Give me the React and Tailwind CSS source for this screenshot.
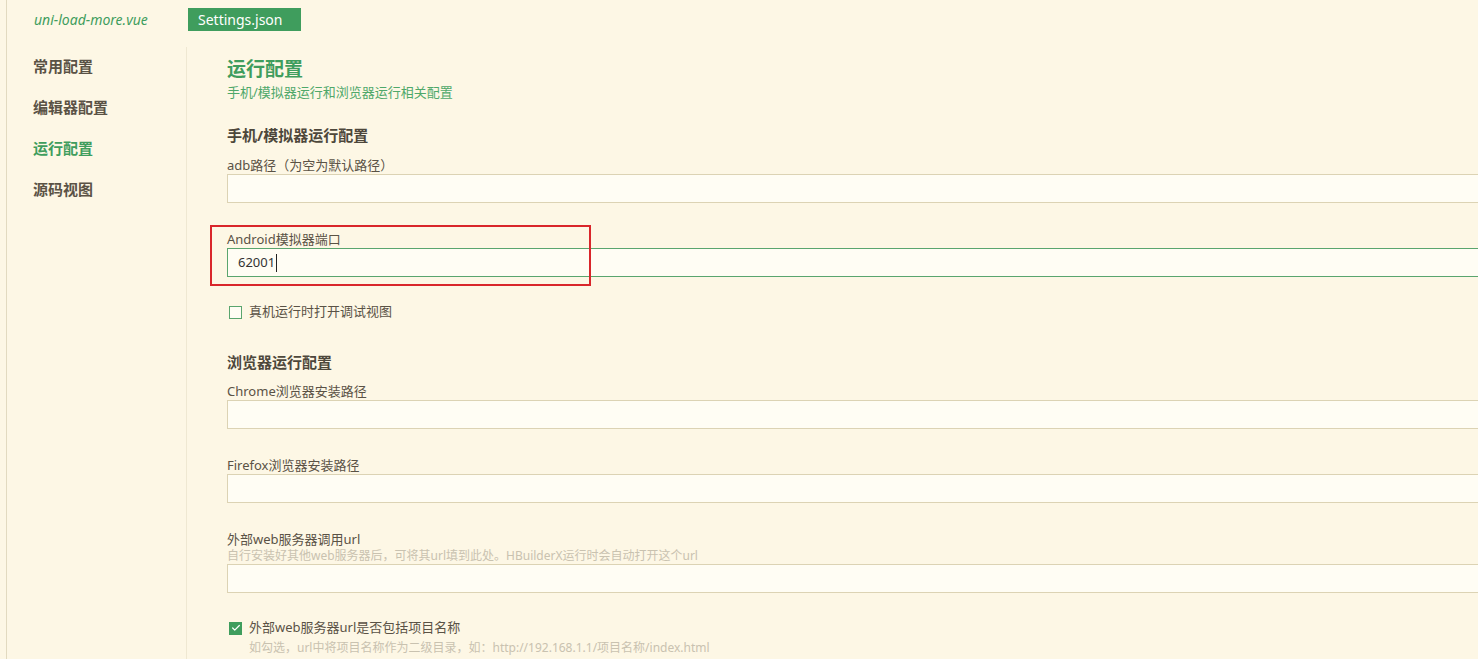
import { Check } from 'lucide-react'

const font = { fontFamily: '"Noto Sans", "Noto Sans CJK SC", sans-serif' }

function Field({ label, hint, value, active }) {
  return (
    <div>
      <div className="text-[13px] leading-[18px] text-[#5a5245]">{label}</div>
      {hint && <div className="text-[12px] leading-[16px] text-[#c9c2b0]">{hint}</div>}
      <div
        className={`flex h-[29px] items-center border border-r-0 bg-[#fffdf4] pl-[10px] text-[13px] text-[#333] ${
          active ? 'border-[#5aa56e]' : 'border-[#dcd3b4]'
        }`}
      >
        {value}
        {active && <span className="ml-[1px] inline-block h-[18px] w-px bg-[#222]" />}
      </div>
    </div>
  )
}

function Checkbox({ checked, label, hint }) {
  return (
    <div>
      <div className="flex h-[20px] items-center gap-[7px]">
        {checked ? (
          <span className="flex h-[13px] w-[13px] items-center justify-center bg-[#3f9d5d]">
            <Check size={10} strokeWidth={3} className="text-white" />
          </span>
        ) : (
          <span className="h-[13px] w-[13px] border border-[#5aa56e] bg-[#fffdf4]" />
        )}
        <span className="text-[13px] text-[#5a5245]">{label}</span>
      </div>
      {hint && <div className="mt-[2px] ml-[20px] text-[12px] leading-[16px] text-[#c9c2b0]">{hint}</div>}
    </div>
  )
}

export default function App() {
  return (
    <div className="h-[659px] w-[1478px] overflow-hidden bg-[#fdf7e5]" style={font}>
      <div className="ml-[6px] flex h-full flex-col border-l border-[#e2dac0]">
        {/* tabs */}
        <div className="flex h-[38px] shrink-0 items-center pt-[1px]">
          <span className="ml-[27px] w-[154px] text-[14px] italic text-[#3f9d5d]">uni-load-more.vue</span>
          <span className="flex h-[23px] w-[113px] items-center bg-[#3f9d5d] pl-[10px] text-[14px] text-white">
            Settings.json
          </span>
        </div>

        <div className="flex min-h-0 flex-1 pt-[9px]">
          {/* sidebar */}
          <nav className="flex w-[180px] shrink-0 flex-col gap-[19px] border-r border-[#efe8d2] pl-[26px] pt-[8px] text-[15px] font-bold text-[#5a5245]">
            <span className="leading-[22px]">常用配置</span>
            <span className="leading-[22px]">编辑器配置</span>
            <span className="leading-[22px] text-[#3f9d5d]">运行配置</span>
            <span className="leading-[22px]">源码视图</span>
          </nav>

          {/* content */}
          <main className="min-w-0 flex-1 pl-[40px] pt-[9px]">
            <h1 className="text-[19px] font-bold leading-[26px] text-[#3f9d5d]">运行配置</h1>
            <p className="text-[13px] leading-[20px] text-[#4fa86a]">手机/模拟器运行和浏览器运行相关配置</p>

            <h2 className="mt-[23px] text-[15px] font-bold leading-[20px] text-[#4d473b]">手机/模拟器运行配置</h2>
            <div className="mt-[11px]">
              <Field label="adb路径（为空为默认路径）" />
            </div>

            <div className="relative mt-[27px]">
              <div className="pointer-events-none absolute left-[-17px] top-[-5px] h-[61px] w-[381px] border-2 border-[#d9262b]" />
              <Field label="Android模拟器端口" value="62001" active />
            </div>

            <div className="mt-[25px] ml-[2px]">
              <Checkbox label="真机运行时打开调试视图" />
            </div>

            <h2 className="mt-[30px] text-[15px] font-bold leading-[20px] text-[#4d473b]">浏览器运行配置</h2>
            <div className="mt-[10px]">
              <Field label="Chrome浏览器安装路径" />
            </div>
            <div className="mt-[27px]">
              <Field label="Firefox浏览器安装路径" />
            </div>
            <div className="mt-[27px]">
              <Field
                label="外部web服务器调用url"
                hint="自行安装好其他web服务器后，可将其url填到此处。HBuilderX运行时会自动打开这个url"
              />
            </div>
            <div className="mt-[25px] ml-[2px]">
              <Checkbox
                checked
                label="外部web服务器url是否包括项目名称"
                hint="如勾选，url中将项目名称作为二级目录，如：http://192.168.1.1/项目名称/index.html"
              />
            </div>
          </main>
        </div>
      </div>
    </div>
  )
}
